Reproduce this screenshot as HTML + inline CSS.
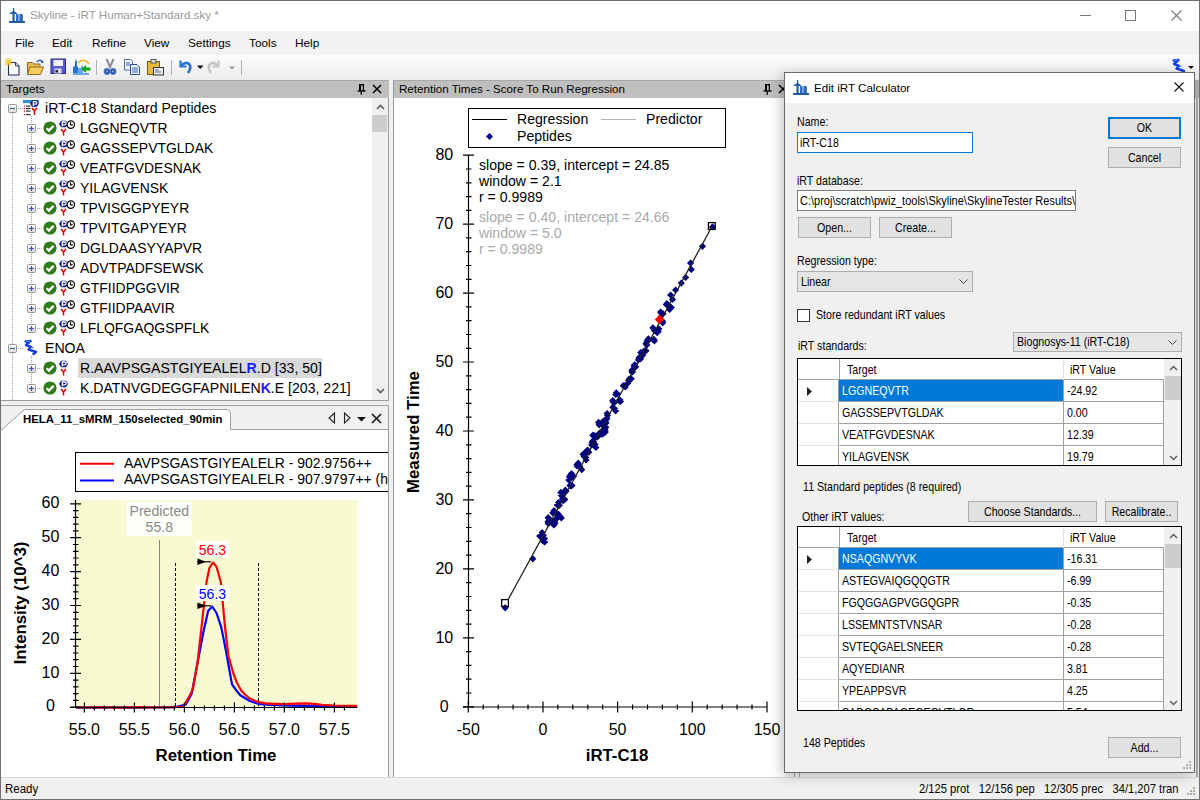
<!DOCTYPE html>
<html><head><meta charset="utf-8">
<style>
html,body{margin:0;padding:0;width:1200px;height:800px;overflow:hidden;background:#f0f0f0;font-family:"Liberation Sans", sans-serif;}
body{position:relative;}
div{box-sizing:border-box;}
svg{position:absolute;overflow:visible;}
svg text{font-family:"Liberation Sans", sans-serif;}
</style></head><body>
<div style="position:absolute;left:0px;top:0px;width:1200px;height:800px;background:#f0f0f0;"></div>
<div style="position:absolute;left:0px;top:0px;width:1200px;height:31px;background:#fff;"></div>
<div style="position:absolute;left:0px;top:31px;width:1200px;height:24px;background:#f2f2f2;"></div>
<div style="position:absolute;left:0px;top:55px;width:1200px;height:25px;background:linear-gradient(#fbfbfb,#f1f1f1 70%,#ececec);"></div>
<svg style="left:9px;top:8px" width="16" height="15" viewBox="0 0 16 15"><g fill="#1f5aa6"><rect x="3.9" y="0" width="1.3" height="3.5"/><path d="M0.8 5.2 L4.5 2.8 L8.2 5.2 V6 H0.8Z"/><rect x="3.5" y="5.5" width="2.1" height="8"/><rect x="7" y="6.2" width="2.6" height="7" fill="#2f6cc0"/><rect x="10.3" y="6" width="3.6" height="7.2" rx="0.8" fill="#2f6cc0"/><path d="M0 13 H16 V14.3 Q16 15 15.3 15 H0.7 Q0 15 0 14.3Z"/></g></svg>
<div style="position:absolute;left:30px;top:8.3px;font-size:11.65px;height:14.0px;line-height:14.0px;color:#9a9a9a;font-weight:normal;white-space:nowrap;">Skyline - iRT Human+Standard.sky *</div>
<div style="position:absolute;left:1080px;top:15px;width:11px;height:1px;background:#777;"></div>
<div style="position:absolute;left:1125px;top:10px;width:11px;height:11px;border:1px solid #777;"></div>
<svg style="left:1171px;top:10px" width="11" height="11" viewBox="0 0 11 11"><path d="M0.5 0.5 L10.5 10.5 M10.5 0.5 L0.5 10.5" stroke="#777" stroke-width="1.1"/></svg>
<div style="position:absolute;left:15px;top:35.7px;font-size:11.8px;height:14.2px;line-height:14.2px;color:#000;font-weight:normal;white-space:nowrap;">File</div>
<div style="position:absolute;left:52px;top:35.7px;font-size:11.8px;height:14.2px;line-height:14.2px;color:#000;font-weight:normal;white-space:nowrap;">Edit</div>
<div style="position:absolute;left:92px;top:35.7px;font-size:11.8px;height:14.2px;line-height:14.2px;color:#000;font-weight:normal;white-space:nowrap;">Refine</div>
<div style="position:absolute;left:144px;top:35.7px;font-size:11.8px;height:14.2px;line-height:14.2px;color:#000;font-weight:normal;white-space:nowrap;">View</div>
<div style="position:absolute;left:188px;top:35.7px;font-size:11.8px;height:14.2px;line-height:14.2px;color:#000;font-weight:normal;white-space:nowrap;">Settings</div>
<div style="position:absolute;left:249px;top:35.7px;font-size:11.8px;height:14.2px;line-height:14.2px;color:#000;font-weight:normal;white-space:nowrap;">Tools</div>
<div style="position:absolute;left:295px;top:35.7px;font-size:11.8px;height:14.2px;line-height:14.2px;color:#000;font-weight:normal;white-space:nowrap;">Help</div>
<svg style="left:4px;top:58px" width="18" height="18" viewBox="0 0 18 18"><path d="M4.5 4.5 h7 l3.5 3.5 v9 h-10.5z" fill="#fbfbff" stroke="#1f2f5a" stroke-width="1.1"/><path d="M11.5 4.5 v3.5 h3.5" fill="#dde" stroke="#1f2f5a" stroke-width="0.9"/><g fill="#f3c623"><rect x="1" y="0.5" width="7" height="7" opacity="0.55"/><rect x="3" y="2.5" width="3" height="3"/></g></svg>
<svg style="left:26px;top:58px" width="20" height="18" viewBox="0 0 20 18"><path d="M1.5 4.5 h5 l1.5 1.5 h6 v10 h-12.5z" fill="#e8b84a" stroke="#8a6a28"/><path d="M4 9 h13.5 l-3 7.5 h-13z" fill="#f6cd5a" stroke="#8a6a28"/><path d="M11 4 q3 -3.5 6 0" stroke="#2a5cb0" stroke-width="1.5" fill="none"/><path d="M15.5 2.5 l2.5 2 l-3 0.8z" fill="#2a5cb0"/></svg>
<svg style="left:50px;top:58px" width="18" height="18" viewBox="0 0 18 18"><rect x="1" y="1" width="14.5" height="14.5" fill="#5a5ad0" stroke="#2e2e8a"/><rect x="3.5" y="2" width="9.5" height="6" fill="#f2f2fa"/><rect x="4.5" y="10.5" width="7" height="5" fill="#d8d8e8"/><rect x="5.5" y="12" width="2.5" height="2.5" fill="#222"/></svg>
<svg style="left:72px;top:57px" width="20" height="20" viewBox="0 0 20 20"><path d="M1 17 v-7 l2 -1 v-4 l1 -3 l1 3 v4 l1 1 v7z" fill="#2a6fc8"/><path d="M6 17 v-6 h3 v-2 h2 v8z" fill="#6aa8e8"/><path d="M1 17 h16" stroke="#6aa8e8" stroke-width="2"/><path d="M6 6 q6 -6 11 1" stroke="#f2b21e" stroke-width="1.6" fill="none"/><path d="M9 12 l5 -4 v2.5 h4.5 v3 h-4.5 v2.5z" fill="#1aa81a"/></svg>
<div style="position:absolute;left:96px;top:60px;width:1px;height:15px;background:#b0b0b0;"></div>
<svg style="left:103px;top:58px" width="14" height="18" viewBox="0 0 14 18"><path d="M3.5 1 l4 9 M10.5 1 l-4 9" stroke="#8a8a9a" stroke-width="2"/><circle cx="4" cy="13.5" r="2.8" fill="#2a4a9a" stroke="#4a7ad0" stroke-width="1.2"/><circle cx="10" cy="13.5" r="2.8" fill="#2a4a9a" stroke="#4a7ad0" stroke-width="1.2"/><circle cx="4" cy="13.5" r="1" fill="#aac"/><circle cx="10" cy="13.5" r="1" fill="#aac"/></svg>
<svg style="left:124px;top:59px" width="17" height="16" viewBox="0 0 17 16"><path d="M0.5 0.5 h6 l2 2 v8.5 h-8z" fill="#f4f6fc" stroke="#4a6ab0"/><path d="M6.5 5.5 h6.5 l2.5 2.5 v7.5 h-9z" fill="#f4f6fc" stroke="#2a4a9a"/><path d="M8 9 h6 M8 11 h6 M8 13 h6 M2 4 h4 M2 6 h4" stroke="#2a5ac0" stroke-width="1"/></svg>
<svg style="left:147px;top:59px" width="18" height="17" viewBox="0 0 18 17"><rect x="0.5" y="2.5" width="12" height="13" fill="#e8b838" stroke="#7a5a18"/><rect x="4" y="0.5" width="5" height="3.5" fill="#ddd" stroke="#555"/><rect x="6.5" y="8.5" width="10" height="7.5" fill="#e8ecf4" stroke="#333"/><path d="M8 11 h4 M8 13 h6" stroke="#667"/></svg>
<div style="position:absolute;left:171px;top:60px;width:1px;height:15px;background:#b0b0b0;"></div>
<svg style="left:178px;top:59px" width="14" height="16" viewBox="0 0 14 16"><path d="M2.5 1.5 v6 h6" fill="none" stroke="#2a6fd8" stroke-width="2.2"/><path d="M3 7 q4 -5 8 -2 q3 3 -1 9" fill="none" stroke="#2a6fd8" stroke-width="2.6"/></svg>
<svg style="left:197px;top:65px" width="8" height="6" viewBox="0 0 8 6"><path d="M0 0.5 h6.5 l-3.25 3.5z" fill="#111"/></svg>
<svg style="left:207px;top:59px" width="14" height="16" viewBox="0 0 14 16"><path d="M11.5 1.5 v6 h-6" fill="none" stroke="#c4c4c4" stroke-width="2.2"/><path d="M11 7 q-4 -5 -8 -2 q-3 3 1 9" fill="none" stroke="#c4c4c4" stroke-width="2.6"/></svg>
<svg style="left:229px;top:66px" width="8" height="5" viewBox="0 0 8 5"><path d="M0 0.5 h6 l-3 3z" fill="#9a9a9a"/></svg>
<div style="position:absolute;left:241px;top:60px;width:1px;height:15px;background:#b0b0b0;"></div>
<svg style="left:1170px;top:57px" width="18" height="18" viewBox="0 0 18 18"><path d="M3.5 3.5 L8.5 3 L4 7 L9 8.8 L6.5 11.5 L14 14 L11.5 16" fill="none" stroke="#1a3fe8" stroke-width="2.4" stroke-linejoin="round" stroke-linecap="round"/><path d="M4 3.5 L8 3.2 M9 8.8 L11.5 10" stroke="#3a8af8" stroke-width="1.2"/></svg>
<svg style="left:1188px;top:66px" width="8" height="5" viewBox="0 0 8 5"><path d="M0 0 h6 l-3 3z" fill="#111"/></svg>
<div style="position:absolute;left:0px;top:777px;width:1200px;height:1px;background:#d9d9d9;"></div>
<div style="position:absolute;left:0px;top:778px;width:1200px;height:21px;background:#f0f0f0;"></div>
<div style="position:absolute;left:5px;top:782.9px;font-size:11.5px;height:13.8px;line-height:13.8px;color:#000;font-weight:normal;white-space:nowrap;transform:scaleY(1.1);transform-origin:0 6.9px;">Ready</div>
<div style="position:absolute;left:919px;top:783.1px;font-size:11.2px;height:13.4px;line-height:13.4px;color:#000;font-weight:normal;white-space:nowrap;transform:scaleY(1.1);transform-origin:0 6.7px;">2/125 prot&nbsp;&nbsp;&nbsp;12/156 pep&nbsp;&nbsp;&nbsp;12/305 prec&nbsp;&nbsp;&nbsp;34/1,207 tran</div>
<svg style="left:1186px;top:786px" width="10" height="10" viewBox="0 0 10 10"><g fill="#aaa"><rect x="7" y="1" width="2" height="2"/><rect x="4" y="4" width="2" height="2"/><rect x="7" y="4" width="2" height="2"/><rect x="1" y="7" width="2" height="2"/><rect x="4" y="7" width="2" height="2"/><rect x="7" y="7" width="2" height="2"/></g></svg>
<div style="position:absolute;left:0px;top:80px;width:389px;height:321px;background:#fff;border:1px solid #9a9a9a;border-top:none;"></div>
<div style="position:absolute;left:0px;top:80px;width:389px;height:18px;background:#bfbfbf;border-top:1px solid #a8a8a8;"></div>
<div style="position:absolute;left:0px;top:80px;width:1px;height:321px;background:#8a8a8a;"></div>
<div style="position:absolute;left:6px;top:81.7px;font-size:11.8px;height:14.2px;line-height:14.2px;color:#000;font-weight:normal;white-space:nowrap;">Targets</div>
<svg style="left:355px;top:83px" width="12" height="12" viewBox="0 0 12 12"><rect x="4" y="1" width="2" height="7" fill="#000"/><rect x="4" y="1" width="5" height="1.3" fill="#000"/><rect x="7.7" y="1" width="1.3" height="7" fill="#000"/><rect x="2.5" y="7.3" width="8" height="1.4" fill="#000"/><rect x="5.6" y="8.5" width="1.3" height="3.3" fill="#000"/></svg>
<svg style="left:372px;top:84px" width="10" height="10" viewBox="0 0 10 10"><path d="M1 1 L9 9 M9 1 L1 9" stroke="#000" stroke-width="1.5"/></svg>
<div style="position:absolute;left:372px;top:98px;width:16px;height:302px;background:#f0f0f0;"></div>
<svg style="left:376px;top:104px" width="9" height="6" viewBox="0 0 9 6"><path d="M1 5 L4.5 1.5 L8 5" stroke="#606060" stroke-width="1.6" fill="none"/></svg>
<div style="position:absolute;left:372px;top:115px;width:15px;height:17px;background:#cdcdcd;"></div>
<svg style="left:376px;top:388px" width="9" height="6" viewBox="0 0 9 6"><path d="M1 1 L4.5 4.5 L8 1" stroke="#606060" stroke-width="1.6" fill="none"/></svg>
<div style="position:absolute;left:12px;top:113px;width:1px;height:287px;background:repeating-linear-gradient(#a0a0a0 0 1px,transparent 1px 2px);"></div>
<svg style="left:8px;top:104px" width="9" height="9" viewBox="0 0 9 9"><defs><linearGradient id="eg" x1="0" y1="0" x2="0" y2="1"><stop offset="0" stop-color="#fff"/><stop offset="1" stop-color="#dcdcdc"/></linearGradient></defs><rect x="0.5" y="0.5" width="8" height="8" rx="1" fill="url(#eg)" stroke="#969696"/><path d="M2 4.5 h5" stroke="#3d5ea6" stroke-width="1.2"/></svg>
<div style="position:absolute;left:18px;top:108px;width:5px;height:1px;background:repeating-linear-gradient(90deg,#a0a0a0 0 1px,transparent 1px 2px);"></div>
<svg style="left:23px;top:99px" width="18" height="18" viewBox="0 0 18 18"><rect x="0" y="1" width="16" height="3.2" fill="#3a8ac8"/><g fill="#333"><rect x="3" y="6.5" width="4.5" height="1.2"/><rect x="3" y="9" width="4.5" height="1.2"/><rect x="3" y="11.5" width="4.5" height="1.2"/><rect x="3" y="15" width="4.5" height="1.2"/></g><g fill="#c00020"><rect x="0.8" y="6.5" width="1.2" height="1.2"/><rect x="0.8" y="9" width="1.2" height="1.2"/><rect x="0.8" y="11.5" width="1.2" height="1.2"/><rect x="0.8" y="15" width="1.2" height="1.2"/></g><path d="M7 4.5 L9 1.2 h5 L16 4.5 L14 7.8 h-5z" fill="#0a1a8a"/><path d="M10.3 7 V2.6 h2 q1.6 0 1.6 1.3 q0 1.3 -1.6 1.3 h-2" stroke="#fff" stroke-width="1.2" fill="none"/><path d="M9 9 L11.5 12 L14 9 M11.5 12 v4" stroke="#e00" stroke-width="1.6" fill="none"/></svg>
<div style="position:absolute;left:45px;top:100.3px;font-size:14.1px;height:16.9px;line-height:16.9px;color:#000;font-weight:normal;white-space:nowrap;">iRT-C18 Standard Peptides</div>
<div style="position:absolute;left:31px;top:116px;width:1px;height:217px;background:repeating-linear-gradient(#a0a0a0 0 1px,transparent 1px 2px);"></div>
<svg style="left:27px;top:124px" width="9" height="9" viewBox="0 0 9 9"><defs><linearGradient id="eg" x1="0" y1="0" x2="0" y2="1"><stop offset="0" stop-color="#fff"/><stop offset="1" stop-color="#dcdcdc"/></linearGradient></defs><rect x="0.5" y="0.5" width="8" height="8" rx="1" fill="url(#eg)" stroke="#969696"/><path d="M2 4.5 h5" stroke="#3d5ea6" stroke-width="1.2"/><path d="M4.5 2 v5" stroke="#3d5ea6" stroke-width="1.2"/></svg>
<div style="position:absolute;left:37px;top:128px;width:5px;height:1px;background:repeating-linear-gradient(90deg,#a0a0a0 0 1px,transparent 1px 2px);"></div>
<svg style="left:42.5px;top:121px" width="14" height="14" viewBox="0 0 14 14"><circle cx="7" cy="7" r="6.6" fill="#2e7d1a"/><path d="M3.6 7.2 L6 9.6 L10.6 4.8" stroke="#fff" stroke-width="2.2" fill="none"/></svg>
<svg style="left:58px;top:120px" width="18" height="16" viewBox="0 0 18 16"><path d="M1 4 L3 0.8 h5 L10 4 L8 7.2 h-5z" fill="#0a1a8a"/><path d="M4.3 6.6 V2 h2.2 q1.7 0 1.7 1.4 q0 1.4 -1.7 1.4 h-2.2" stroke="#fff" stroke-width="1.3" fill="none"/><path d="M3 9 L5.5 12 L8 9 M5.5 12 v3.5" stroke="#e00" stroke-width="1.5" fill="none"/><circle cx="12.8" cy="4.6" r="3.7" fill="#fff" stroke="#000" stroke-width="1.2"/><path d="M12.5 2.2 v2.7 h2.2" stroke="#000" stroke-width="1.1" fill="none"/></svg>
<div style="position:absolute;left:80px;top:120.4px;font-size:13.95px;height:16.7px;line-height:16.7px;color:#000;font-weight:normal;white-space:nowrap;">LGGNEQVTR</div>
<svg style="left:27px;top:144px" width="9" height="9" viewBox="0 0 9 9"><defs><linearGradient id="eg" x1="0" y1="0" x2="0" y2="1"><stop offset="0" stop-color="#fff"/><stop offset="1" stop-color="#dcdcdc"/></linearGradient></defs><rect x="0.5" y="0.5" width="8" height="8" rx="1" fill="url(#eg)" stroke="#969696"/><path d="M2 4.5 h5" stroke="#3d5ea6" stroke-width="1.2"/><path d="M4.5 2 v5" stroke="#3d5ea6" stroke-width="1.2"/></svg>
<div style="position:absolute;left:37px;top:148px;width:5px;height:1px;background:repeating-linear-gradient(90deg,#a0a0a0 0 1px,transparent 1px 2px);"></div>
<svg style="left:42.5px;top:141px" width="14" height="14" viewBox="0 0 14 14"><circle cx="7" cy="7" r="6.6" fill="#2e7d1a"/><path d="M3.6 7.2 L6 9.6 L10.6 4.8" stroke="#fff" stroke-width="2.2" fill="none"/></svg>
<svg style="left:58px;top:140px" width="18" height="16" viewBox="0 0 18 16"><path d="M1 4 L3 0.8 h5 L10 4 L8 7.2 h-5z" fill="#0a1a8a"/><path d="M4.3 6.6 V2 h2.2 q1.7 0 1.7 1.4 q0 1.4 -1.7 1.4 h-2.2" stroke="#fff" stroke-width="1.3" fill="none"/><path d="M3 9 L5.5 12 L8 9 M5.5 12 v3.5" stroke="#e00" stroke-width="1.5" fill="none"/><circle cx="12.8" cy="4.6" r="3.7" fill="#fff" stroke="#000" stroke-width="1.2"/><path d="M12.5 2.2 v2.7 h2.2" stroke="#000" stroke-width="1.1" fill="none"/></svg>
<div style="position:absolute;left:80px;top:140.4px;font-size:13.95px;height:16.7px;line-height:16.7px;color:#000;font-weight:normal;white-space:nowrap;">GAGSSEPVTGLDAK</div>
<svg style="left:27px;top:164px" width="9" height="9" viewBox="0 0 9 9"><defs><linearGradient id="eg" x1="0" y1="0" x2="0" y2="1"><stop offset="0" stop-color="#fff"/><stop offset="1" stop-color="#dcdcdc"/></linearGradient></defs><rect x="0.5" y="0.5" width="8" height="8" rx="1" fill="url(#eg)" stroke="#969696"/><path d="M2 4.5 h5" stroke="#3d5ea6" stroke-width="1.2"/><path d="M4.5 2 v5" stroke="#3d5ea6" stroke-width="1.2"/></svg>
<div style="position:absolute;left:37px;top:168px;width:5px;height:1px;background:repeating-linear-gradient(90deg,#a0a0a0 0 1px,transparent 1px 2px);"></div>
<svg style="left:42.5px;top:161px" width="14" height="14" viewBox="0 0 14 14"><circle cx="7" cy="7" r="6.6" fill="#2e7d1a"/><path d="M3.6 7.2 L6 9.6 L10.6 4.8" stroke="#fff" stroke-width="2.2" fill="none"/></svg>
<svg style="left:58px;top:160px" width="18" height="16" viewBox="0 0 18 16"><path d="M1 4 L3 0.8 h5 L10 4 L8 7.2 h-5z" fill="#0a1a8a"/><path d="M4.3 6.6 V2 h2.2 q1.7 0 1.7 1.4 q0 1.4 -1.7 1.4 h-2.2" stroke="#fff" stroke-width="1.3" fill="none"/><path d="M3 9 L5.5 12 L8 9 M5.5 12 v3.5" stroke="#e00" stroke-width="1.5" fill="none"/><circle cx="12.8" cy="4.6" r="3.7" fill="#fff" stroke="#000" stroke-width="1.2"/><path d="M12.5 2.2 v2.7 h2.2" stroke="#000" stroke-width="1.1" fill="none"/></svg>
<div style="position:absolute;left:80px;top:160.4px;font-size:13.95px;height:16.7px;line-height:16.7px;color:#000;font-weight:normal;white-space:nowrap;">VEATFGVDESNAK</div>
<svg style="left:27px;top:184px" width="9" height="9" viewBox="0 0 9 9"><defs><linearGradient id="eg" x1="0" y1="0" x2="0" y2="1"><stop offset="0" stop-color="#fff"/><stop offset="1" stop-color="#dcdcdc"/></linearGradient></defs><rect x="0.5" y="0.5" width="8" height="8" rx="1" fill="url(#eg)" stroke="#969696"/><path d="M2 4.5 h5" stroke="#3d5ea6" stroke-width="1.2"/><path d="M4.5 2 v5" stroke="#3d5ea6" stroke-width="1.2"/></svg>
<div style="position:absolute;left:37px;top:188px;width:5px;height:1px;background:repeating-linear-gradient(90deg,#a0a0a0 0 1px,transparent 1px 2px);"></div>
<svg style="left:42.5px;top:181px" width="14" height="14" viewBox="0 0 14 14"><circle cx="7" cy="7" r="6.6" fill="#2e7d1a"/><path d="M3.6 7.2 L6 9.6 L10.6 4.8" stroke="#fff" stroke-width="2.2" fill="none"/></svg>
<svg style="left:58px;top:180px" width="18" height="16" viewBox="0 0 18 16"><path d="M1 4 L3 0.8 h5 L10 4 L8 7.2 h-5z" fill="#0a1a8a"/><path d="M4.3 6.6 V2 h2.2 q1.7 0 1.7 1.4 q0 1.4 -1.7 1.4 h-2.2" stroke="#fff" stroke-width="1.3" fill="none"/><path d="M3 9 L5.5 12 L8 9 M5.5 12 v3.5" stroke="#e00" stroke-width="1.5" fill="none"/><circle cx="12.8" cy="4.6" r="3.7" fill="#fff" stroke="#000" stroke-width="1.2"/><path d="M12.5 2.2 v2.7 h2.2" stroke="#000" stroke-width="1.1" fill="none"/></svg>
<div style="position:absolute;left:80px;top:180.4px;font-size:13.95px;height:16.7px;line-height:16.7px;color:#000;font-weight:normal;white-space:nowrap;">YILAGVENSK</div>
<svg style="left:27px;top:204px" width="9" height="9" viewBox="0 0 9 9"><defs><linearGradient id="eg" x1="0" y1="0" x2="0" y2="1"><stop offset="0" stop-color="#fff"/><stop offset="1" stop-color="#dcdcdc"/></linearGradient></defs><rect x="0.5" y="0.5" width="8" height="8" rx="1" fill="url(#eg)" stroke="#969696"/><path d="M2 4.5 h5" stroke="#3d5ea6" stroke-width="1.2"/><path d="M4.5 2 v5" stroke="#3d5ea6" stroke-width="1.2"/></svg>
<div style="position:absolute;left:37px;top:208px;width:5px;height:1px;background:repeating-linear-gradient(90deg,#a0a0a0 0 1px,transparent 1px 2px);"></div>
<svg style="left:42.5px;top:201px" width="14" height="14" viewBox="0 0 14 14"><circle cx="7" cy="7" r="6.6" fill="#2e7d1a"/><path d="M3.6 7.2 L6 9.6 L10.6 4.8" stroke="#fff" stroke-width="2.2" fill="none"/></svg>
<svg style="left:58px;top:200px" width="18" height="16" viewBox="0 0 18 16"><path d="M1 4 L3 0.8 h5 L10 4 L8 7.2 h-5z" fill="#0a1a8a"/><path d="M4.3 6.6 V2 h2.2 q1.7 0 1.7 1.4 q0 1.4 -1.7 1.4 h-2.2" stroke="#fff" stroke-width="1.3" fill="none"/><path d="M3 9 L5.5 12 L8 9 M5.5 12 v3.5" stroke="#e00" stroke-width="1.5" fill="none"/><circle cx="12.8" cy="4.6" r="3.7" fill="#fff" stroke="#000" stroke-width="1.2"/><path d="M12.5 2.2 v2.7 h2.2" stroke="#000" stroke-width="1.1" fill="none"/></svg>
<div style="position:absolute;left:80px;top:200.4px;font-size:13.95px;height:16.7px;line-height:16.7px;color:#000;font-weight:normal;white-space:nowrap;">TPVISGGPYEYR</div>
<svg style="left:27px;top:224px" width="9" height="9" viewBox="0 0 9 9"><defs><linearGradient id="eg" x1="0" y1="0" x2="0" y2="1"><stop offset="0" stop-color="#fff"/><stop offset="1" stop-color="#dcdcdc"/></linearGradient></defs><rect x="0.5" y="0.5" width="8" height="8" rx="1" fill="url(#eg)" stroke="#969696"/><path d="M2 4.5 h5" stroke="#3d5ea6" stroke-width="1.2"/><path d="M4.5 2 v5" stroke="#3d5ea6" stroke-width="1.2"/></svg>
<div style="position:absolute;left:37px;top:228px;width:5px;height:1px;background:repeating-linear-gradient(90deg,#a0a0a0 0 1px,transparent 1px 2px);"></div>
<svg style="left:42.5px;top:221px" width="14" height="14" viewBox="0 0 14 14"><circle cx="7" cy="7" r="6.6" fill="#2e7d1a"/><path d="M3.6 7.2 L6 9.6 L10.6 4.8" stroke="#fff" stroke-width="2.2" fill="none"/></svg>
<svg style="left:58px;top:220px" width="18" height="16" viewBox="0 0 18 16"><path d="M1 4 L3 0.8 h5 L10 4 L8 7.2 h-5z" fill="#0a1a8a"/><path d="M4.3 6.6 V2 h2.2 q1.7 0 1.7 1.4 q0 1.4 -1.7 1.4 h-2.2" stroke="#fff" stroke-width="1.3" fill="none"/><path d="M3 9 L5.5 12 L8 9 M5.5 12 v3.5" stroke="#e00" stroke-width="1.5" fill="none"/><circle cx="12.8" cy="4.6" r="3.7" fill="#fff" stroke="#000" stroke-width="1.2"/><path d="M12.5 2.2 v2.7 h2.2" stroke="#000" stroke-width="1.1" fill="none"/></svg>
<div style="position:absolute;left:80px;top:220.4px;font-size:13.95px;height:16.7px;line-height:16.7px;color:#000;font-weight:normal;white-space:nowrap;">TPVITGAPYEYR</div>
<svg style="left:27px;top:244px" width="9" height="9" viewBox="0 0 9 9"><defs><linearGradient id="eg" x1="0" y1="0" x2="0" y2="1"><stop offset="0" stop-color="#fff"/><stop offset="1" stop-color="#dcdcdc"/></linearGradient></defs><rect x="0.5" y="0.5" width="8" height="8" rx="1" fill="url(#eg)" stroke="#969696"/><path d="M2 4.5 h5" stroke="#3d5ea6" stroke-width="1.2"/><path d="M4.5 2 v5" stroke="#3d5ea6" stroke-width="1.2"/></svg>
<div style="position:absolute;left:37px;top:248px;width:5px;height:1px;background:repeating-linear-gradient(90deg,#a0a0a0 0 1px,transparent 1px 2px);"></div>
<svg style="left:42.5px;top:241px" width="14" height="14" viewBox="0 0 14 14"><circle cx="7" cy="7" r="6.6" fill="#2e7d1a"/><path d="M3.6 7.2 L6 9.6 L10.6 4.8" stroke="#fff" stroke-width="2.2" fill="none"/></svg>
<svg style="left:58px;top:240px" width="18" height="16" viewBox="0 0 18 16"><path d="M1 4 L3 0.8 h5 L10 4 L8 7.2 h-5z" fill="#0a1a8a"/><path d="M4.3 6.6 V2 h2.2 q1.7 0 1.7 1.4 q0 1.4 -1.7 1.4 h-2.2" stroke="#fff" stroke-width="1.3" fill="none"/><path d="M3 9 L5.5 12 L8 9 M5.5 12 v3.5" stroke="#e00" stroke-width="1.5" fill="none"/><circle cx="12.8" cy="4.6" r="3.7" fill="#fff" stroke="#000" stroke-width="1.2"/><path d="M12.5 2.2 v2.7 h2.2" stroke="#000" stroke-width="1.1" fill="none"/></svg>
<div style="position:absolute;left:80px;top:240.4px;font-size:13.95px;height:16.7px;line-height:16.7px;color:#000;font-weight:normal;white-space:nowrap;">DGLDAASYYAPVR</div>
<svg style="left:27px;top:264px" width="9" height="9" viewBox="0 0 9 9"><defs><linearGradient id="eg" x1="0" y1="0" x2="0" y2="1"><stop offset="0" stop-color="#fff"/><stop offset="1" stop-color="#dcdcdc"/></linearGradient></defs><rect x="0.5" y="0.5" width="8" height="8" rx="1" fill="url(#eg)" stroke="#969696"/><path d="M2 4.5 h5" stroke="#3d5ea6" stroke-width="1.2"/><path d="M4.5 2 v5" stroke="#3d5ea6" stroke-width="1.2"/></svg>
<div style="position:absolute;left:37px;top:268px;width:5px;height:1px;background:repeating-linear-gradient(90deg,#a0a0a0 0 1px,transparent 1px 2px);"></div>
<svg style="left:42.5px;top:261px" width="14" height="14" viewBox="0 0 14 14"><circle cx="7" cy="7" r="6.6" fill="#2e7d1a"/><path d="M3.6 7.2 L6 9.6 L10.6 4.8" stroke="#fff" stroke-width="2.2" fill="none"/></svg>
<svg style="left:58px;top:260px" width="18" height="16" viewBox="0 0 18 16"><path d="M1 4 L3 0.8 h5 L10 4 L8 7.2 h-5z" fill="#0a1a8a"/><path d="M4.3 6.6 V2 h2.2 q1.7 0 1.7 1.4 q0 1.4 -1.7 1.4 h-2.2" stroke="#fff" stroke-width="1.3" fill="none"/><path d="M3 9 L5.5 12 L8 9 M5.5 12 v3.5" stroke="#e00" stroke-width="1.5" fill="none"/><circle cx="12.8" cy="4.6" r="3.7" fill="#fff" stroke="#000" stroke-width="1.2"/><path d="M12.5 2.2 v2.7 h2.2" stroke="#000" stroke-width="1.1" fill="none"/></svg>
<div style="position:absolute;left:80px;top:260.4px;font-size:13.95px;height:16.7px;line-height:16.7px;color:#000;font-weight:normal;white-space:nowrap;">ADVTPADFSEWSK</div>
<svg style="left:27px;top:284px" width="9" height="9" viewBox="0 0 9 9"><defs><linearGradient id="eg" x1="0" y1="0" x2="0" y2="1"><stop offset="0" stop-color="#fff"/><stop offset="1" stop-color="#dcdcdc"/></linearGradient></defs><rect x="0.5" y="0.5" width="8" height="8" rx="1" fill="url(#eg)" stroke="#969696"/><path d="M2 4.5 h5" stroke="#3d5ea6" stroke-width="1.2"/><path d="M4.5 2 v5" stroke="#3d5ea6" stroke-width="1.2"/></svg>
<div style="position:absolute;left:37px;top:288px;width:5px;height:1px;background:repeating-linear-gradient(90deg,#a0a0a0 0 1px,transparent 1px 2px);"></div>
<svg style="left:42.5px;top:281px" width="14" height="14" viewBox="0 0 14 14"><circle cx="7" cy="7" r="6.6" fill="#2e7d1a"/><path d="M3.6 7.2 L6 9.6 L10.6 4.8" stroke="#fff" stroke-width="2.2" fill="none"/></svg>
<svg style="left:58px;top:280px" width="18" height="16" viewBox="0 0 18 16"><path d="M1 4 L3 0.8 h5 L10 4 L8 7.2 h-5z" fill="#0a1a8a"/><path d="M4.3 6.6 V2 h2.2 q1.7 0 1.7 1.4 q0 1.4 -1.7 1.4 h-2.2" stroke="#fff" stroke-width="1.3" fill="none"/><path d="M3 9 L5.5 12 L8 9 M5.5 12 v3.5" stroke="#e00" stroke-width="1.5" fill="none"/><circle cx="12.8" cy="4.6" r="3.7" fill="#fff" stroke="#000" stroke-width="1.2"/><path d="M12.5 2.2 v2.7 h2.2" stroke="#000" stroke-width="1.1" fill="none"/></svg>
<div style="position:absolute;left:80px;top:280.4px;font-size:13.95px;height:16.7px;line-height:16.7px;color:#000;font-weight:normal;white-space:nowrap;">GTFIIDPGGVIR</div>
<svg style="left:27px;top:304px" width="9" height="9" viewBox="0 0 9 9"><defs><linearGradient id="eg" x1="0" y1="0" x2="0" y2="1"><stop offset="0" stop-color="#fff"/><stop offset="1" stop-color="#dcdcdc"/></linearGradient></defs><rect x="0.5" y="0.5" width="8" height="8" rx="1" fill="url(#eg)" stroke="#969696"/><path d="M2 4.5 h5" stroke="#3d5ea6" stroke-width="1.2"/><path d="M4.5 2 v5" stroke="#3d5ea6" stroke-width="1.2"/></svg>
<div style="position:absolute;left:37px;top:308px;width:5px;height:1px;background:repeating-linear-gradient(90deg,#a0a0a0 0 1px,transparent 1px 2px);"></div>
<svg style="left:42.5px;top:301px" width="14" height="14" viewBox="0 0 14 14"><circle cx="7" cy="7" r="6.6" fill="#2e7d1a"/><path d="M3.6 7.2 L6 9.6 L10.6 4.8" stroke="#fff" stroke-width="2.2" fill="none"/></svg>
<svg style="left:58px;top:300px" width="18" height="16" viewBox="0 0 18 16"><path d="M1 4 L3 0.8 h5 L10 4 L8 7.2 h-5z" fill="#0a1a8a"/><path d="M4.3 6.6 V2 h2.2 q1.7 0 1.7 1.4 q0 1.4 -1.7 1.4 h-2.2" stroke="#fff" stroke-width="1.3" fill="none"/><path d="M3 9 L5.5 12 L8 9 M5.5 12 v3.5" stroke="#e00" stroke-width="1.5" fill="none"/><circle cx="12.8" cy="4.6" r="3.7" fill="#fff" stroke="#000" stroke-width="1.2"/><path d="M12.5 2.2 v2.7 h2.2" stroke="#000" stroke-width="1.1" fill="none"/></svg>
<div style="position:absolute;left:80px;top:300.4px;font-size:13.95px;height:16.7px;line-height:16.7px;color:#000;font-weight:normal;white-space:nowrap;">GTFIIDPAAVIR</div>
<svg style="left:27px;top:324px" width="9" height="9" viewBox="0 0 9 9"><defs><linearGradient id="eg" x1="0" y1="0" x2="0" y2="1"><stop offset="0" stop-color="#fff"/><stop offset="1" stop-color="#dcdcdc"/></linearGradient></defs><rect x="0.5" y="0.5" width="8" height="8" rx="1" fill="url(#eg)" stroke="#969696"/><path d="M2 4.5 h5" stroke="#3d5ea6" stroke-width="1.2"/><path d="M4.5 2 v5" stroke="#3d5ea6" stroke-width="1.2"/></svg>
<div style="position:absolute;left:37px;top:328px;width:5px;height:1px;background:repeating-linear-gradient(90deg,#a0a0a0 0 1px,transparent 1px 2px);"></div>
<svg style="left:42.5px;top:321px" width="14" height="14" viewBox="0 0 14 14"><circle cx="7" cy="7" r="6.6" fill="#2e7d1a"/><path d="M3.6 7.2 L6 9.6 L10.6 4.8" stroke="#fff" stroke-width="2.2" fill="none"/></svg>
<svg style="left:58px;top:320px" width="18" height="16" viewBox="0 0 18 16"><path d="M1 4 L3 0.8 h5 L10 4 L8 7.2 h-5z" fill="#0a1a8a"/><path d="M4.3 6.6 V2 h2.2 q1.7 0 1.7 1.4 q0 1.4 -1.7 1.4 h-2.2" stroke="#fff" stroke-width="1.3" fill="none"/><path d="M3 9 L5.5 12 L8 9 M5.5 12 v3.5" stroke="#e00" stroke-width="1.5" fill="none"/><circle cx="12.8" cy="4.6" r="3.7" fill="#fff" stroke="#000" stroke-width="1.2"/><path d="M12.5 2.2 v2.7 h2.2" stroke="#000" stroke-width="1.1" fill="none"/></svg>
<div style="position:absolute;left:80px;top:320.4px;font-size:13.95px;height:16.7px;line-height:16.7px;color:#000;font-weight:normal;white-space:nowrap;">LFLQFGAQGSPFLK</div>
<svg style="left:8px;top:344px" width="9" height="9" viewBox="0 0 9 9"><defs><linearGradient id="eg" x1="0" y1="0" x2="0" y2="1"><stop offset="0" stop-color="#fff"/><stop offset="1" stop-color="#dcdcdc"/></linearGradient></defs><rect x="0.5" y="0.5" width="8" height="8" rx="1" fill="url(#eg)" stroke="#969696"/><path d="M2 4.5 h5" stroke="#3d5ea6" stroke-width="1.2"/></svg>
<div style="position:absolute;left:18px;top:348px;width:5px;height:1px;background:repeating-linear-gradient(90deg,#a0a0a0 0 1px,transparent 1px 2px);"></div>
<svg style="left:22px;top:338px" width="18" height="18" viewBox="0 0 18 18"><path d="M3.5 3.5 L8.5 3 L4 7 L9 8.8 L6.5 11.5 L14 14 L11.5 16" fill="none" stroke="#1a3fe8" stroke-width="2.4" stroke-linejoin="round" stroke-linecap="round"/><path d="M4 3.5 L8 3.2 M9 8.8 L11.5 10" stroke="#3a8af8" stroke-width="1.2"/></svg>
<div style="position:absolute;left:45px;top:340.3px;font-size:14.1px;height:16.9px;line-height:16.9px;color:#000;font-weight:normal;white-space:nowrap;">ENOA</div>
<div style="position:absolute;left:31px;top:356px;width:1px;height:37px;background:repeating-linear-gradient(#a0a0a0 0 1px,transparent 1px 2px);"></div>
<div style="position:absolute;left:78px;top:358px;width:244px;height:20px;background:#d9d9d9;"></div>
<svg style="left:27px;top:364px" width="9" height="9" viewBox="0 0 9 9"><defs><linearGradient id="eg" x1="0" y1="0" x2="0" y2="1"><stop offset="0" stop-color="#fff"/><stop offset="1" stop-color="#dcdcdc"/></linearGradient></defs><rect x="0.5" y="0.5" width="8" height="8" rx="1" fill="url(#eg)" stroke="#969696"/><path d="M2 4.5 h5" stroke="#3d5ea6" stroke-width="1.2"/><path d="M4.5 2 v5" stroke="#3d5ea6" stroke-width="1.2"/></svg>
<div style="position:absolute;left:37px;top:368px;width:5px;height:1px;background:repeating-linear-gradient(90deg,#a0a0a0 0 1px,transparent 1px 2px);"></div>
<svg style="left:42.5px;top:361px" width="14" height="14" viewBox="0 0 14 14"><circle cx="7" cy="7" r="6.6" fill="#2e7d1a"/><path d="M3.6 7.2 L6 9.6 L10.6 4.8" stroke="#fff" stroke-width="2.2" fill="none"/></svg>
<svg style="left:58px;top:360px" width="18" height="16" viewBox="0 0 18 16"><path d="M1 4 L3 0.8 h5 L10 4 L8 7.2 h-5z" fill="#0a1a8a"/><path d="M4.3 6.6 V2 h2.2 q1.7 0 1.7 1.4 q0 1.4 -1.7 1.4 h-2.2" stroke="#fff" stroke-width="1.3" fill="none"/><path d="M3 9 L5.5 12 L8 9 M5.5 12 v3.5" stroke="#e00" stroke-width="1.5" fill="none"/></svg>
<div style="position:absolute;left:80px;top:360.3px;font-size:14.1px;height:16.9px;line-height:16.9px;color:#000;font-weight:normal;white-space:nowrap;">R.AAVPSGASTGIYEALEL<b style="color:#1a1aff">R</b>.D [33, 50]</div>
<svg style="left:27px;top:384px" width="9" height="9" viewBox="0 0 9 9"><defs><linearGradient id="eg" x1="0" y1="0" x2="0" y2="1"><stop offset="0" stop-color="#fff"/><stop offset="1" stop-color="#dcdcdc"/></linearGradient></defs><rect x="0.5" y="0.5" width="8" height="8" rx="1" fill="url(#eg)" stroke="#969696"/><path d="M2 4.5 h5" stroke="#3d5ea6" stroke-width="1.2"/><path d="M4.5 2 v5" stroke="#3d5ea6" stroke-width="1.2"/></svg>
<div style="position:absolute;left:37px;top:388px;width:5px;height:1px;background:repeating-linear-gradient(90deg,#a0a0a0 0 1px,transparent 1px 2px);"></div>
<svg style="left:42.5px;top:381px" width="14" height="14" viewBox="0 0 14 14"><circle cx="7" cy="7" r="6.6" fill="#2e7d1a"/><path d="M3.6 7.2 L6 9.6 L10.6 4.8" stroke="#fff" stroke-width="2.2" fill="none"/></svg>
<svg style="left:58px;top:380px" width="18" height="16" viewBox="0 0 18 16"><path d="M1 4 L3 0.8 h5 L10 4 L8 7.2 h-5z" fill="#0a1a8a"/><path d="M4.3 6.6 V2 h2.2 q1.7 0 1.7 1.4 q0 1.4 -1.7 1.4 h-2.2" stroke="#fff" stroke-width="1.3" fill="none"/><path d="M3 9 L5.5 12 L8 9 M5.5 12 v3.5" stroke="#e00" stroke-width="1.5" fill="none"/></svg>
<div style="position:absolute;left:80px;top:380.3px;font-size:14.1px;height:16.9px;line-height:16.9px;color:#000;font-weight:normal;white-space:nowrap;">K.DATNVGDEGGFAPNILEN<b style="color:#1a1aff">K</b>.E [203, 221]</div>
<div style="position:absolute;left:0px;top:405px;width:389px;height:372px;background:#fff;border:1px solid #9a9a9a;border-top:none;border-bottom:none;"></div>
<div style="position:absolute;left:0px;top:405px;width:389px;height:25px;background:#f0f0f0;border-top:1px solid #a0a0a0;border-right:1px solid #a0a0a0;"></div>
<div style="position:absolute;left:0px;top:429px;width:389px;height:1px;background:#a0a0a0;"></div>
<div style="position:absolute;left:0px;top:405px;width:1px;height:372px;background:#8a8a8a;"></div>
<svg style="left:1px;top:408px" width="232" height="23" viewBox="0 0 232 23"><path d="M1 21.5 L23.5 1.5 H224 Q229.5 1.5 229.5 6 V21.5" fill="#fff" stroke="#a0a0a0"/><rect x="2" y="21" width="227" height="2" fill="#fff"/></svg>
<div style="position:absolute;left:23px;top:412.9px;font-size:11.4px;height:13.7px;line-height:13.7px;color:#000;font-weight:bold;white-space:nowrap;">HELA_11_sMRM_150selected_90min</div>
<svg style="left:326px;top:412px" width="12" height="12" viewBox="0 0 12 12"><path d="M8.5 1 L3 6 L8.5 11 Z" fill="none" stroke="#222" stroke-width="1.1"/></svg>
<svg style="left:341px;top:412px" width="12" height="12" viewBox="0 0 12 12"><path d="M3.5 1 L9 6 L3.5 11 Z" fill="none" stroke="#222" stroke-width="1.1"/></svg>
<svg style="left:356px;top:415px" width="12" height="8" viewBox="0 0 12 8"><path d="M1 2 H10 L5.5 6.5Z" fill="#111"/></svg>
<svg style="left:371px;top:413px" width="11" height="11" viewBox="0 0 11 11"><path d="M1 1 L10 10 M10 1 L1 10" stroke="#111" stroke-width="1.5"/></svg>
<div style="position:absolute;left:1px;top:430px;width:387px;height:347px;overflow:hidden;"><svg style="left:-1px;top:-430px" width="389" height="777" viewBox="0 0 389 777"><rect x="76" y="500" width="281.5" height="207" fill="#fafad2"/><rect x="75.5" y="452.5" width="320" height="39" fill="#fff" stroke="#000" stroke-width="1"/><path d="M80 463.7 H114" stroke="#ff0000" stroke-width="2"/><path d="M80 480.5 H114" stroke="#0000ff" stroke-width="2"/><text x="124" y="467.6" font-size="13.95">AAVPSGASTGIYEALELR - 902.9756++</text><text x="124" y="484.4" font-size="13.95">AAVPSGASTGIYEALELR - 907.9797++ (heavy)</text><rect x="126.5" y="502" width="65.5" height="34" fill="#fefefa"/><text x="159.3" y="515.5" font-size="14.1" fill="#8a8a8a" text-anchor="middle">Predicted</text><text x="159.3" y="531.5" font-size="14.1" fill="#8a8a8a" text-anchor="middle">55.8</text><path d="M159.5 540 V707" stroke="#888" stroke-width="1"/><path d="M175.5 563 V707 M258.5 563 V707" stroke="#000" stroke-width="1" stroke-dasharray="3,2"/><polyline points="76.0,707.6 110.0,707.4 130.0,707.6 150.0,707.5 175.0,707.2 185.6,704.6 191.6,694.0 197.5,663.0 203.4,632.0 208.2,610.8 212.2,606.5 216.5,613.0 221.3,627.4 226.0,651.0 229.0,668.0 232.0,684.4 236.0,690.0 240.3,695.3 249.8,701.0 258.0,703.8 270.0,705.0 290.0,705.6 310.0,705.8 330.0,706.4 357.0,706.6" fill="none" stroke="#0000ff" stroke-width="2.2" stroke-linejoin="round"/><polyline points="76.0,707.5 100.0,707.3 120.0,707.6 140.0,707.2 160.0,707.5 183.0,707.0 186.8,700.5 189.5,696.0 192.8,689.5 197.5,663.0 202.3,620.0 206.5,582.0 209.4,568.0 213.0,562.5 216.5,566.8 220.8,582.0 224.8,625.0 228.4,656.0 233.1,672.5 237.0,683.0 241.4,690.7 245.0,694.5 249.8,698.5 258.5,702.2 266.0,703.3 275.0,703.8 285.0,704.2 295.0,703.6 305.0,703.4 315.0,703.8 322.0,704.8 335.0,705.5 357.0,705.8" fill="none" stroke="#ff0000" stroke-width="2.2" stroke-linejoin="round"/><rect x="196" y="541" width="33" height="16" fill="#fffffa"/><text x="212.5" y="554.5" font-size="14.1" fill="#ff0000" text-anchor="middle">56.3</text><path d="M197.5 558.5 L206 561.8 L197.5 565 Z" fill="#000"/><path d="M197 561.8 H211" stroke="#000" stroke-width="1.2"/><rect x="196" y="585" width="33" height="16" fill="#fffffa"/><text x="212.5" y="598.5" font-size="14.1" fill="#0000ff" text-anchor="middle">56.3</text><path d="M197.5 602.5 L206 605.8 L197.5 609 Z" fill="#000"/><path d="M197 605.8 H211" stroke="#000" stroke-width="1.2"/><path d="M75.5 500 V707.5 M70 707.5 H357.5" stroke="#000" stroke-width="1.2"/><path d="M70 707.2 H81 M73 700.4 H78.5 M73 693.6 H78.5 M73 686.9 H78.5 M73 680.1 H78.5 M70 673.3 H81 M73 666.5 H78.5 M73 659.7 H78.5 M73 653.0 H78.5 M73 646.2 H78.5 M70 639.4 H81 M73 632.6 H78.5 M73 625.8 H78.5 M73 619.1 H78.5 M73 612.3 H78.5 M70 605.5 H81 M73 598.7 H78.5 M73 591.9 H78.5 M73 585.2 H78.5 M73 578.4 H78.5 M70 571.6 H81 M73 564.8 H78.5 M73 558.0 H78.5 M73 551.3 H78.5 M73 544.5 H78.5 M70 537.7 H81 M73 530.9 H78.5 M73 524.1 H78.5 M73 517.4 H78.5 M73 510.6 H78.5 M70 503.8 H81 M84.4 702.5 V712.5 M94.4 705.5 V710.5 M104.4 705.5 V710.5 M114.4 705.5 V710.5 M124.4 705.5 V710.5 M134.4 702.5 V712.5 M144.4 705.5 V710.5 M154.4 705.5 V710.5 M164.4 705.5 V710.5 M174.4 705.5 V710.5 M184.4 702.5 V712.5 M194.4 705.5 V710.5 M204.4 705.5 V710.5 M214.4 705.5 V710.5 M224.4 705.5 V710.5 M234.4 702.5 V712.5 M244.4 705.5 V710.5 M254.4 705.5 V710.5 M264.4 705.5 V710.5 M274.4 705.5 V710.5 M284.4 702.5 V712.5 M294.4 705.5 V710.5 M304.4 705.5 V710.5 M314.4 705.5 V710.5 M324.4 705.5 V710.5 M334.4 702.5 V712.5 M344.4 705.5 V710.5" stroke="#000" stroke-width="1.2"/><text x="50.5" y="711.4" font-size="16" text-anchor="middle">0</text><text x="50.5" y="677.5" font-size="16" text-anchor="middle">10</text><text x="50.5" y="643.6" font-size="16" text-anchor="middle">20</text><text x="50.5" y="609.7" font-size="16" text-anchor="middle">30</text><text x="50.5" y="575.8" font-size="16" text-anchor="middle">40</text><text x="50.5" y="541.9" font-size="16" text-anchor="middle">50</text><text x="50.5" y="508.0" font-size="16" text-anchor="middle">60</text><text x="84.4" y="735" font-size="16" text-anchor="middle">55.0</text><text x="134.4" y="735" font-size="16" text-anchor="middle">55.5</text><text x="184.4" y="735" font-size="16" text-anchor="middle">56.0</text><text x="234.4" y="735" font-size="16" text-anchor="middle">56.5</text><text x="284.4" y="735" font-size="16" text-anchor="middle">57.0</text><text x="334.4" y="735" font-size="16" text-anchor="middle">57.5</text><text x="216" y="761" font-size="16.8" font-weight="bold" text-anchor="middle">Retention Time</text><text transform="translate(26 603) rotate(-90)" font-size="16.8" font-weight="bold" text-anchor="middle">Intensity (10^3)</text></svg></div>
<div style="position:absolute;left:393px;top:80px;width:393px;height:697px;background:#fff;border-left:1px solid #9a9a9a;"></div>
<div style="position:absolute;left:393px;top:80px;width:393px;height:18px;background:#bfbfbf;border-top:1px solid #a8a8a8;border-left:1px solid #9a9a9a;"></div>
<div style="position:absolute;left:399px;top:81.8px;font-size:11.6px;height:13.9px;line-height:13.9px;color:#000;font-weight:normal;white-space:nowrap;">Retention Times - Score To Run Regression</div>
<svg style="left:761px;top:83px" width="12" height="12" viewBox="0 0 12 12"><rect x="4" y="1" width="2" height="7" fill="#000"/><rect x="4" y="1" width="5" height="1.3" fill="#000"/><rect x="7.7" y="1" width="1.3" height="7" fill="#000"/><rect x="2.5" y="7.3" width="8" height="1.4" fill="#000"/><rect x="5.6" y="8.5" width="1.3" height="3.3" fill="#000"/></svg>
<svg style="left:778px;top:84px" width="10" height="10" viewBox="0 0 10 10"><path d="M1 1 L9 9 M9 1 L1 9" stroke="#000" stroke-width="1.5"/></svg>
<div style="position:absolute;left:394px;top:98px;width:392px;height:679px;overflow:hidden;"><svg style="left:-394px;top:-98px" width="786" height="777" viewBox="0 0 786 777"><rect x="468.5" y="108.5" width="257" height="39" fill="#fff" stroke="#000"/><path d="M472 119.5 H507" stroke="#000"/><path d="M601 119.5 H636" stroke="#b4b4b4"/><text x="517" y="123.5" font-size="14.1">Regression</text><text x="646" y="123.5" font-size="14.1">Predictor</text><path d="M489.5 133 L493 136.5 L489.5 140 L486 136.5Z" fill="#000080"/><text x="517" y="140.5" font-size="14.1">Peptides</text><text x="479" y="170.3" font-size="14.1">slope = 0.39, intercept = 24.85</text><text x="479" y="186.3" font-size="14.1">window = 2.1</text><text x="479" y="202.3" font-size="14.1">r = 0.9989</text><text x="479" y="222.3" font-size="14.1" fill="#aaaaaa">slope = 0.40, intercept = 24.66</text><text x="479" y="238.3" font-size="14.1" fill="#aaaaaa">window = 5.0</text><text x="479" y="254.3" font-size="14.1" fill="#aaaaaa">r = 0.9989</text><path d="M505.2 604.2L508.8 607.8L505.2 611.4L501.6 607.8ZM532.8 555.2L536.4 558.8L532.8 562.4L529.2 558.8ZM542.1 529.0L545.7 532.6L542.1 536.2L538.5 532.6ZM541.6 532.7L545.2 536.3L541.6 539.9L538.0 536.3ZM542.9 537.4L546.5 541.0L542.9 544.6L539.3 541.0ZM548.1 519.6L551.7 523.2L548.1 526.8L544.5 523.2ZM550.0 515.8L553.6 519.4L550.0 523.0L546.4 519.4ZM552.8 509.3L556.4 512.9L552.8 516.5L549.2 512.9ZM557.5 514.0L561.1 517.6L557.5 521.2L553.9 517.6ZM559.4 512.1L563.0 515.7L559.4 519.3L555.8 515.7ZM554.7 518.6L558.3 522.2L554.7 525.8L551.1 522.2ZM558.5 498.9L562.1 502.5L558.5 506.1L554.9 502.5ZM563.2 497.1L566.8 500.7L563.2 504.3L559.6 500.7ZM562.2 491.4L565.8 495.0L562.2 498.6L558.6 495.0ZM566.0 487.7L569.6 491.3L566.0 494.9L562.4 491.3ZM570.7 482.1L574.3 485.7L570.7 489.3L567.1 485.7ZM568.8 476.4L572.4 480.0L568.8 483.6L565.2 480.0ZM571.6 470.8L575.2 474.4L571.6 478.0L568.0 474.4ZM573.5 472.7L577.1 476.3L573.5 479.9L569.9 476.3ZM578.2 459.6L581.8 463.2L578.2 466.8L574.6 463.2ZM580.0 463.4L583.6 467.0L580.0 470.6L576.4 467.0ZM584.7 449.2L588.3 452.8L584.7 456.4L581.1 452.8ZM587.5 446.4L591.1 450.0L587.5 453.6L583.9 450.0ZM585.7 453.9L589.3 457.5L585.7 461.1L582.1 457.5ZM592.2 438.9L595.8 442.5L592.2 446.1L588.6 442.5ZM595.0 434.2L598.6 437.8L595.0 441.4L591.4 437.8ZM595.0 440.8L598.6 444.4L595.0 448.0L591.4 444.4ZM600.7 430.4L604.3 434.0L600.7 437.6L597.1 434.0ZM598.8 419.2L602.4 422.8L598.8 426.4L595.2 422.8ZM604.4 418.3L608.0 421.9L604.4 425.5L600.8 421.9ZM604.4 425.8L608.0 429.4L604.4 433.0L600.8 429.4ZM594.4 432.1L598.0 435.7L594.4 439.3L590.8 435.7ZM598.8 431.2L602.4 434.8L598.8 438.4L595.2 434.8ZM604.0 417.2L607.6 420.8L604.0 424.4L600.4 420.8ZM604.9 426.0L608.5 429.6L604.9 433.2L601.3 429.6ZM607.5 412.0L611.1 415.6L607.5 419.2L603.9 415.6ZM612.8 398.0L616.4 401.6L612.8 405.2L609.2 401.6ZM614.5 405.0L618.1 408.6L614.5 412.2L610.9 408.6ZM616.3 389.2L619.9 392.8L616.3 396.4L612.7 392.8ZM619.8 396.2L623.4 399.8L619.8 403.4L616.2 399.8ZM624.2 382.2L627.8 385.8L624.2 389.4L620.6 385.8ZM628.5 377.0L632.1 380.6L628.5 384.2L624.9 380.6ZM631.2 375.2L634.8 378.8L631.2 382.4L627.6 378.8ZM632.0 366.4L635.6 370.0L632.0 373.6L628.4 370.0ZM634.7 361.2L638.3 364.8L634.7 368.4L631.1 364.8ZM639.0 354.2L642.6 357.8L639.0 361.4L635.4 357.8ZM640.8 348.9L644.4 352.5L640.8 356.1L637.2 352.5ZM644.3 347.2L647.9 350.8L644.3 354.4L640.7 350.8ZM646.0 340.2L649.6 343.8L646.0 347.4L642.4 343.8ZM647.8 335.8L651.4 339.4L647.8 343.0L644.2 339.4ZM653.9 335.8L657.5 339.4L653.9 343.0L650.3 339.4ZM654.8 326.2L658.4 329.8L654.8 333.4L651.2 329.8ZM658.3 327.9L661.9 331.5L658.3 335.1L654.7 331.5ZM662.7 319.2L666.3 322.8L662.7 326.4L659.1 322.8ZM661.8 311.3L665.4 314.9L661.8 318.5L658.2 314.9ZM667.0 300.8L670.6 304.4L667.0 308.0L663.4 304.4ZM670.6 303.4L674.2 307.0L670.6 310.6L667.0 307.0ZM712.5 223.3L716.1 226.9L712.5 230.5L708.9 226.9ZM702.5 242.7L706.1 246.3L702.5 249.9L698.9 246.3ZM690.6 259.5L694.2 263.1L690.6 266.7L687.0 263.1ZM691.3 265.8L694.9 269.4L691.3 273.0L687.7 269.4ZM685.6 273.9L689.2 277.5L685.6 281.1L682.0 277.5ZM681.3 279.5L684.9 283.1L681.3 286.7L677.7 283.1ZM675.6 286.4L679.2 290.0L675.6 293.6L672.0 290.0ZM670.6 291.4L674.2 295.0L670.6 298.6L667.0 295.0ZM672.5 295.8L676.1 299.4L672.5 303.0L668.9 299.4ZM666.3 300.8L669.9 304.4L666.3 308.0L662.7 304.4ZM671.3 303.9L674.9 307.5L671.3 311.1L667.7 307.5ZM663.1 310.2L666.7 313.8L663.1 317.4L659.5 313.8ZM542.6 530.5L546.2 534.1L542.6 537.7L539.0 534.1ZM543.3 531.7L546.9 535.3L543.3 538.9L539.7 535.3ZM542.6 535.2L546.2 538.8L542.6 542.4L539.0 538.8ZM539.7 532.5L543.3 536.1L539.7 539.7L536.1 536.1ZM544.7 538.3L548.3 541.9L544.7 545.5L541.1 541.9ZM544.5 535.1L548.1 538.7L544.5 542.3L540.9 538.7ZM548.0 518.1L551.6 521.7L548.0 525.3L544.4 521.7ZM548.3 520.0L551.9 523.6L548.3 527.2L544.7 523.6ZM548.1 514.1L551.7 517.7L548.1 521.3L544.5 517.7ZM549.1 518.3L552.7 521.9L549.1 525.5L545.5 521.9ZM553.9 507.3L557.5 510.9L553.9 514.5L550.3 510.9ZM554.0 507.1L557.6 510.7L554.0 514.3L550.4 510.7ZM558.0 511.8L561.6 515.4L558.0 519.0L554.4 515.4ZM555.5 516.2L559.1 519.8L555.5 523.4L551.9 519.8ZM558.2 510.4L561.8 514.0L558.2 517.6L554.6 514.0ZM561.3 514.3L564.9 517.9L561.3 521.5L557.7 517.9ZM553.9 521.4L557.5 525.0L553.9 528.6L550.3 525.0ZM554.9 519.7L558.5 523.3L554.9 526.9L551.3 523.3ZM557.3 501.5L560.9 505.1L557.3 508.7L553.7 505.1ZM559.3 501.7L562.9 505.3L559.3 508.9L555.7 505.3ZM564.8 495.9L568.4 499.5L564.8 503.1L561.2 499.5ZM562.6 495.1L566.2 498.7L562.6 502.3L559.0 498.7ZM560.8 488.8L564.4 492.4L560.8 496.0L557.2 492.4ZM561.4 492.0L565.0 495.6L561.4 499.2L557.8 495.6ZM564.0 488.8L567.6 492.4L564.0 496.0L560.4 492.4ZM565.4 486.6L569.0 490.2L565.4 493.8L561.8 490.2ZM572.0 482.0L575.6 485.6L572.0 489.2L568.4 485.6ZM570.0 482.0L573.6 485.6L570.0 489.2L566.4 485.6ZM569.6 473.7L573.2 477.3L569.6 480.9L566.0 477.3ZM570.7 473.5L574.3 477.1L570.7 480.7L567.1 477.1ZM572.6 472.9L576.2 476.5L572.6 480.1L569.0 476.5ZM569.7 472.5L573.3 476.1L569.7 479.7L566.1 476.1ZM573.0 473.2L576.6 476.8L573.0 480.4L569.4 476.8ZM571.5 470.0L575.1 473.6L571.5 477.2L567.9 473.6ZM576.9 462.3L580.5 465.9L576.9 469.5L573.3 465.9ZM577.0 461.1L580.6 464.7L577.0 468.3L573.4 464.7ZM581.7 466.1L585.3 469.7L581.7 473.3L578.1 469.7ZM579.4 462.5L583.0 466.1L579.4 469.7L575.8 466.1ZM584.8 450.9L588.4 454.5L584.8 458.1L581.2 454.5ZM583.1 450.7L586.7 454.3L583.1 457.9L579.5 454.3ZM588.7 448.6L592.3 452.2L588.7 455.8L585.1 452.2ZM585.6 449.1L589.2 452.7L585.6 456.3L582.0 452.7ZM584.1 452.9L587.7 456.5L584.1 460.1L580.5 456.5ZM586.1 456.4L589.7 460.0L586.1 463.6L582.5 460.0ZM591.6 441.4L595.2 445.0L591.6 448.6L588.0 445.0ZM592.4 437.8L596.0 441.4L592.4 445.0L588.8 441.4ZM594.3 432.3L597.9 435.9L594.3 439.5L590.7 435.9ZM593.3 432.1L596.9 435.7L593.3 439.3L589.7 435.7ZM595.8 443.8L599.4 447.4L595.8 451.0L592.2 447.4ZM593.6 438.1L597.2 441.7L593.6 445.3L590.0 441.7ZM602.6 430.6L606.2 434.2L602.6 437.8L599.0 434.2ZM600.3 428.8L603.9 432.4L600.3 436.0L596.7 432.4ZM599.2 421.2L602.8 424.8L599.2 428.4L595.6 424.8ZM598.6 418.7L602.2 422.3L598.6 425.9L595.0 422.3ZM602.6 420.8L606.2 424.4L602.6 428.0L599.0 424.4ZM602.5 418.3L606.1 421.9L602.5 425.5L598.9 421.9ZM605.8 423.6L609.4 427.2L605.8 430.8L602.2 427.2ZM605.3 428.5L608.9 432.1L605.3 435.7L601.7 432.1ZM594.9 433.8L598.5 437.4L594.9 441.0L591.3 437.4ZM592.8 431.7L596.4 435.3L592.8 438.9L589.2 435.3ZM597.4 433.3L601.0 436.9L597.4 440.5L593.8 436.9ZM598.0 430.9L601.6 434.5L598.0 438.1L594.4 434.5ZM606.0 419.3L609.6 422.9L606.0 426.5L602.4 422.9ZM605.9 416.9L609.5 420.5L605.9 424.1L602.3 420.5ZM604.9 427.4L608.5 431.0L604.9 434.6L601.3 431.0ZM604.8 424.7L608.4 428.3L604.8 431.9L601.2 428.3ZM607.1 409.9L610.7 413.5L607.1 417.1L603.5 413.5ZM607.0 414.9L610.6 418.5L607.0 422.1L603.4 418.5ZM614.6 398.8L618.2 402.4L614.6 406.0L611.0 402.4ZM612.8 397.0L616.4 400.6L612.8 404.2L609.2 400.6ZM612.9 403.6L616.5 407.2L612.9 410.8L609.3 407.2ZM615.6 407.2L619.2 410.8L615.6 414.4L612.0 410.8ZM615.7 390.9L619.3 394.5L615.7 398.1L612.1 394.5ZM617.4 390.4L621.0 394.0L617.4 397.6L613.8 394.0ZM620.5 397.8L624.1 401.4L620.5 405.0L616.9 401.4ZM619.3 397.4L622.9 401.0L619.3 404.6L615.7 401.0ZM623.3 382.1L626.9 385.7L623.3 389.3L619.7 385.7ZM625.3 383.3L628.9 386.9L625.3 390.5L621.7 386.9ZM627.7 379.7L631.3 383.3L627.7 386.9L624.1 383.3ZM629.1 377.5L632.7 381.1L629.1 384.7L625.5 381.1ZM629.2 375.5L632.8 379.1L629.2 382.7L625.6 379.1ZM630.2 376.2L633.8 379.8L630.2 383.4L626.6 379.8ZM631.9 368.3L635.5 371.9L631.9 375.5L628.3 371.9ZM632.6 368.2L636.2 371.8L632.6 375.4L629.0 371.8ZM634.1 362.1L637.7 365.7L634.1 369.3L630.5 365.7ZM635.7 363.2L639.3 366.8L635.7 370.4L632.1 366.8ZM638.4 356.3L642.0 359.9L638.4 363.5L634.8 359.9ZM640.5 355.3L644.1 358.9L640.5 362.5L636.9 358.9ZM642.7 351.6L646.3 355.2L642.7 358.8L639.1 355.2ZM640.9 349.1L644.5 352.7L640.9 356.3L637.3 352.7ZM643.0 349.2L646.6 352.8L643.0 356.4L639.4 352.8ZM646.0 347.1L649.6 350.7L646.0 354.3L642.4 350.7ZM646.8 341.5L650.4 345.1L646.8 348.7L643.2 345.1ZM646.9 338.2L650.5 341.8L646.9 345.4L643.3 341.8ZM648.9 336.3L652.5 339.9L648.9 343.5L645.3 339.9ZM648.5 335.3L652.1 338.9L648.5 342.5L644.9 338.9ZM654.4 337.4L658.0 341.0L654.4 344.6L650.8 341.0ZM654.4 337.1L658.0 340.7L654.4 344.3L650.8 340.7ZM652.9 324.2L656.5 327.8L652.9 331.4L649.3 327.8ZM654.6 327.1L658.2 330.7L654.6 334.3L651.0 330.7ZM657.2 329.0L660.8 332.6L657.2 336.2L653.6 332.6ZM658.8 325.2L662.4 328.8L658.8 332.4L655.2 328.8ZM662.6 317.6L666.2 321.2L662.6 324.8L659.0 321.2ZM660.9 317.0L664.5 320.6L660.9 324.2L657.3 320.6ZM661.1 309.4L664.7 313.0L661.1 316.6L657.5 313.0ZM660.6 308.5L664.2 312.1L660.6 315.7L657.0 312.1ZM666.9 300.1L670.5 303.7L666.9 307.3L663.3 303.7ZM667.4 301.3L671.0 304.9L667.4 308.5L663.8 304.9ZM669.6 305.8L673.2 309.4L669.6 313.0L666.0 309.4ZM668.6 302.8L672.2 306.4L668.6 310.0L665.0 306.4Z" fill="#000080"/><path d="M508.2 599.5 L712 226.5" stroke="#222" stroke-width="1.3"/><path d="M659.5 314.8 L664.2 319.5 L659.5 324.2 L654.8 319.5Z" fill="#ff0000"/><rect x="501.6" y="599.6" width="6.8" height="6.8" fill="none" stroke="#000" stroke-width="1.3"/><rect x="708.4" y="222.6" width="6.8" height="6.8" fill="none" stroke="#000" stroke-width="1.3"/><path d="M468.5 155 V707 M463 707 H767" stroke="#000" stroke-width="1.2"/><path d="M463 706.8 H474 M466 693.0 H471.5 M466 679.2 H471.5 M466 665.4 H471.5 M466 651.6 H471.5 M463 637.8 H474 M466 624.1 H471.5 M466 610.3 H471.5 M466 596.5 H471.5 M466 582.7 H471.5 M463 568.9 H474 M466 555.1 H471.5 M466 541.3 H471.5 M466 527.5 H471.5 M466 513.7 H471.5 M463 499.9 H474 M466 486.2 H471.5 M466 472.4 H471.5 M466 458.6 H471.5 M466 444.8 H471.5 M463 431.0 H474 M466 417.2 H471.5 M466 403.4 H471.5 M466 389.6 H471.5 M466 375.8 H471.5 M463 362.0 H474 M466 348.3 H471.5 M466 334.5 H471.5 M466 320.7 H471.5 M466 306.9 H471.5 M463 293.1 H474 M466 279.3 H471.5 M466 265.5 H471.5 M466 251.7 H471.5 M466 237.9 H471.5 M463 224.1 H474 M466 210.4 H471.5 M466 196.6 H471.5 M466 182.8 H471.5 M466 169.0 H471.5 M463 155.2 H474 M468.3 701.5 V712.5 M483.2 704.5 V709.5 M498.2 704.5 V709.5 M513.1 704.5 V709.5 M528.0 704.5 V709.5 M543.0 701.5 V712.5 M557.9 704.5 V709.5 M572.8 704.5 V709.5 M587.8 704.5 V709.5 M602.7 704.5 V709.5 M617.6 701.5 V712.5 M632.6 704.5 V709.5 M647.5 704.5 V709.5 M662.4 704.5 V709.5 M677.4 704.5 V709.5 M692.3 701.5 V712.5 M707.2 704.5 V709.5 M722.2 704.5 V709.5 M737.1 704.5 V709.5 M752.0 704.5 V709.5 M767.0 701.5 V712.5" stroke="#000" stroke-width="1.2"/><text x="444.3" y="712.0" font-size="16" text-anchor="middle">0</text><text x="444.3" y="643.0" font-size="16" text-anchor="middle">10</text><text x="444.3" y="574.1" font-size="16" text-anchor="middle">20</text><text x="444.3" y="505.1" font-size="16" text-anchor="middle">30</text><text x="444.3" y="436.2" font-size="16" text-anchor="middle">40</text><text x="444.3" y="367.2" font-size="16" text-anchor="middle">50</text><text x="444.3" y="298.3" font-size="16" text-anchor="middle">60</text><text x="444.3" y="229.3" font-size="16" text-anchor="middle">70</text><text x="444.3" y="160.4" font-size="16" text-anchor="middle">80</text><text x="468.3" y="735" font-size="16" text-anchor="middle">-50</text><text x="543.0" y="735" font-size="16" text-anchor="middle">0</text><text x="617.6" y="735" font-size="16" text-anchor="middle">50</text><text x="692.3" y="735" font-size="16" text-anchor="middle">100</text><text x="767.0" y="735" font-size="16" text-anchor="middle">150</text><text x="617" y="761" font-size="16.8" font-weight="bold" text-anchor="middle">iRT-C18</text><text transform="translate(419 432) rotate(-90)" font-size="16.8" font-weight="bold" text-anchor="middle">Measured Time</text></svg></div>
<div style="position:absolute;left:1195px;top:80px;width:4px;height:697px;background:#efefef;"></div>
<div style="position:absolute;left:1196px;top:80px;width:2px;height:697px;background:#a8a8a8;"></div>
<div style="position:absolute;left:1195px;top:80px;width:4px;height:18px;background:#b0b0b0;"></div>
<div style="position:absolute;left:784px;top:72px;width:411px;height:701px;background:#f0f0f0;border:1px solid #6a6a6a;box-shadow:-3px 3px 12px rgba(0,0,0,0.22);"></div>
<div style="position:absolute;left:785px;top:73px;width:409px;height:30px;background:#fff;"></div>
<svg style="left:793px;top:80px" width="16" height="15" viewBox="0 0 16 15"><g fill="#1f5aa6"><rect x="3.9" y="0" width="1.3" height="3.5"/><path d="M0.8 5.2 L4.5 2.8 L8.2 5.2 V6 H0.8Z"/><rect x="3.5" y="5.5" width="2.1" height="8"/><rect x="7" y="6.2" width="2.6" height="7" fill="#2f6cc0"/><rect x="10.3" y="6" width="3.6" height="7.2" rx="0.8" fill="#2f6cc0"/><path d="M0 13 H16 V14.3 Q16 15 15.3 15 H0.7 Q0 15 0 14.3Z"/></g></svg>
<div style="position:absolute;left:814px;top:80.8px;font-size:11.6px;height:13.9px;line-height:13.9px;color:#000;font-weight:normal;white-space:nowrap;">Edit iRT Calculator</div>
<svg style="left:1174px;top:82px" width="10" height="10" viewBox="0 0 10 10"><path d="M0.5 0.5 L9.5 9.5 M9.5 0.5 L0.5 9.5" stroke="#111" stroke-width="1.1"/></svg>
<div style="position:absolute;left:797px;top:115.9px;font-size:10.65px;height:12.8px;line-height:12.8px;color:#000;font-weight:normal;white-space:nowrap;transform:scaleY(1.12);transform-origin:0 6.4px;">Name:</div>
<div style="position:absolute;left:797px;top:132px;width:176px;height:21px;background:#fff;border:1px solid #0078d7;overflow:hidden;"><div style="position:absolute;left:2px;top:2.5px;font-size:10.65px;line-height:14px;white-space:nowrap;transform:scaleY(1.12);">iRT-C18</div></div>
<div style="position:absolute;left:1108px;top:117px;width:73px;height:22px;background:#e1e1e1;border:2px solid #0078d7;"><div style="position:absolute;left:0;right:0;top:2.0px;text-align:center;font-size:10.65px;line-height:14px;white-space:nowrap;transform:scaleY(1.12);">OK</div></div>
<div style="position:absolute;left:1108px;top:147px;width:73px;height:21px;background:#e1e1e1;border:1px solid #adadad;"><div style="position:absolute;left:0;right:0;top:2.5px;text-align:center;font-size:10.65px;line-height:14px;white-space:nowrap;transform:scaleY(1.12);">Cancel</div></div>
<div style="position:absolute;left:797px;top:174.9px;font-size:10.65px;height:12.8px;line-height:12.8px;color:#000;font-weight:normal;white-space:nowrap;transform:scaleY(1.12);transform-origin:0 6.4px;">iRT database:</div>
<div style="position:absolute;left:797px;top:190px;width:279px;height:21px;background:#fff;border:1px solid #7a7a7a;overflow:hidden;"><div style="position:absolute;left:2px;top:2.5px;font-size:10.65px;line-height:14px;white-space:nowrap;transform:scaleY(1.12);"><span style='font-size:11px'>C:\proj\scratch\pwiz_tools\Skyline\SkylineTester Results\</span></div></div>
<div style="position:absolute;left:798px;top:217px;width:73px;height:21px;background:#e1e1e1;border:1px solid #adadad;"><div style="position:absolute;left:0;right:0;top:2.5px;text-align:center;font-size:10.65px;line-height:14px;white-space:nowrap;transform:scaleY(1.12);">Open...</div></div>
<div style="position:absolute;left:879px;top:217px;width:73px;height:21px;background:#e1e1e1;border:1px solid #adadad;"><div style="position:absolute;left:0;right:0;top:2.5px;text-align:center;font-size:10.65px;line-height:14px;white-space:nowrap;transform:scaleY(1.12);">Create...</div></div>
<div style="position:absolute;left:797px;top:255.4px;font-size:10.65px;height:12.8px;line-height:12.8px;color:#000;font-weight:normal;white-space:nowrap;transform:scaleY(1.12);transform-origin:0 6.4px;">Regression type:</div>
<div style="position:absolute;left:797px;top:271px;width:176px;height:21px;background:#e5e5e5;border:1px solid #adadad;"><div style="position:absolute;left:3px;top:2.5px;font-size:10.65px;line-height:14px;white-space:nowrap;transform:scaleY(1.12);">Linear</div></div>
<svg style="left:959px;top:279.0px" width="9" height="5" viewBox="0 0 9 5"><path d="M0.5 0.5 L4.5 4.5 L8.5 0.5" stroke="#444" stroke-width="1" fill="none"/></svg>
<div style="position:absolute;left:797px;top:309px;width:13px;height:13px;background:#fff;border:1px solid #333;"></div>
<div style="position:absolute;left:816px;top:308.9px;font-size:10.65px;height:12.8px;line-height:12.8px;color:#000;font-weight:normal;white-space:nowrap;transform:scaleY(1.12);transform-origin:0 6.4px;">Store redundant iRT values</div>
<div style="position:absolute;left:798px;top:339.9px;font-size:10.65px;height:12.8px;line-height:12.8px;color:#000;font-weight:normal;white-space:nowrap;transform:scaleY(1.12);transform-origin:0 6.4px;">iRT standards:</div>
<div style="position:absolute;left:1013px;top:332px;width:169px;height:20px;background:#e5e5e5;border:1px solid #adadad;"><div style="position:absolute;left:3px;top:2.0px;font-size:10.65px;line-height:14px;white-space:nowrap;transform:scaleY(1.12);">Biognosys-11 (iRT-C18)</div></div>
<svg style="left:1168px;top:339.5px" width="9" height="5" viewBox="0 0 9 5"><path d="M0.5 0.5 L4.5 4.5 L8.5 0.5" stroke="#444" stroke-width="1" fill="none"/></svg>
<div style="position:absolute;left:797px;top:358px;width:385px;height:108px;background:#fff;border:1px solid #000;overflow:hidden;"></div>
<div style="position:absolute;left:798px;top:359px;width:383px;height:106px;overflow:hidden;"><div style="position:absolute;left:0;top:0;width:383px;height:21px;background:#fff;border-bottom:1px solid #a0a0a0;"></div><div style="position:absolute;left:41px;top:0;width:1px;height:21px;background:#a0a0a0;"></div><div style="position:absolute;left:265px;top:2px;width:1px;height:19px;background:#e0e0e0;"></div><div style="position:absolute;left:49px;top:4px;font-size:10.65px;line-height:14px;transform:scaleY(1.12);">Target</div><div style="position:absolute;left:272px;top:4px;font-size:10.65px;line-height:14px;transform:scaleY(1.12);">iRT Value</div><div style="position:absolute;left:0;top:21px;width:41px;height:22px;border-bottom:1px solid #e4e4e4;border-right:1px solid #a0a0a0;"></div><div style="position:absolute;left:41px;top:21px;width:225px;height:22px;background:#0078d7;border-right:1px solid #a0a0a0;border-bottom:1px solid #a0a0a0;"></div><div style="position:absolute;left:266px;top:21px;width:100px;height:22px;border-right:1px solid #a0a0a0;border-bottom:1px solid #a0a0a0;"></div><div style="position:absolute;left:44px;top:25px;font-size:10.65px;line-height:14px;color:#fff;white-space:nowrap;transform:scaleY(1.12);">LGGNEQVTR</div><div style="position:absolute;left:269px;top:25px;font-size:10.65px;line-height:14px;white-space:nowrap;transform:scaleY(1.12);">-24.92</div><svg style="left:8px;top:27px" width="8" height="10"><path d="M1 1 L6 5.5 L1 10Z" fill="#222"/></svg><div style="position:absolute;left:0;top:43px;width:41px;height:22px;border-bottom:1px solid #e4e4e4;border-right:1px solid #a0a0a0;"></div><div style="position:absolute;left:41px;top:43px;width:225px;height:22px;background:#fff;border-right:1px solid #a0a0a0;border-bottom:1px solid #a0a0a0;"></div><div style="position:absolute;left:266px;top:43px;width:100px;height:22px;border-right:1px solid #a0a0a0;border-bottom:1px solid #a0a0a0;"></div><div style="position:absolute;left:44px;top:47px;font-size:10.65px;line-height:14px;color:#000;white-space:nowrap;transform:scaleY(1.12);">GAGSSEPVTGLDAK</div><div style="position:absolute;left:269px;top:47px;font-size:10.65px;line-height:14px;white-space:nowrap;transform:scaleY(1.12);">0.00</div><div style="position:absolute;left:0;top:65px;width:41px;height:22px;border-bottom:1px solid #e4e4e4;border-right:1px solid #a0a0a0;"></div><div style="position:absolute;left:41px;top:65px;width:225px;height:22px;background:#fff;border-right:1px solid #a0a0a0;border-bottom:1px solid #a0a0a0;"></div><div style="position:absolute;left:266px;top:65px;width:100px;height:22px;border-right:1px solid #a0a0a0;border-bottom:1px solid #a0a0a0;"></div><div style="position:absolute;left:44px;top:69px;font-size:10.65px;line-height:14px;color:#000;white-space:nowrap;transform:scaleY(1.12);">VEATFGVDESNAK</div><div style="position:absolute;left:269px;top:69px;font-size:10.65px;line-height:14px;white-space:nowrap;transform:scaleY(1.12);">12.39</div><div style="position:absolute;left:0;top:87px;width:41px;height:22px;border-bottom:1px solid #e4e4e4;border-right:1px solid #a0a0a0;"></div><div style="position:absolute;left:41px;top:87px;width:225px;height:22px;background:#fff;border-right:1px solid #a0a0a0;border-bottom:1px solid #a0a0a0;"></div><div style="position:absolute;left:266px;top:87px;width:100px;height:22px;border-right:1px solid #a0a0a0;border-bottom:1px solid #a0a0a0;"></div><div style="position:absolute;left:44px;top:91px;font-size:10.65px;line-height:14px;color:#000;white-space:nowrap;transform:scaleY(1.12);">YILAGVENSK</div><div style="position:absolute;left:269px;top:91px;font-size:10.65px;line-height:14px;white-space:nowrap;transform:scaleY(1.12);">19.79</div><div style="position:absolute;left:366px;top:0;width:17px;height:106px;background:#f0f0f0;"></div><svg style="left:371px;top:6px" width="9" height="6"><path d="M1 5 L4.5 1.5 L8 5" stroke="#606060" stroke-width="1.5" fill="none"/></svg><div style="position:absolute;left:367px;top:17px;width:16px;height:24px;background:#cdcdcd;"></div><svg style="left:371px;top:96px" width="9" height="6"><path d="M1 1 L4.5 4.5 L8 1" stroke="#606060" stroke-width="1.5" fill="none"/></svg></div>
<div style="position:absolute;left:803px;top:481.4px;font-size:10.65px;height:12.8px;line-height:12.8px;color:#000;font-weight:normal;white-space:nowrap;transform:scaleY(1.12);transform-origin:0 6.4px;">11 Standard peptides (8 required)</div>
<div style="position:absolute;left:968px;top:501px;width:129px;height:21px;background:#e1e1e1;border:1px solid #adadad;"><div style="position:absolute;left:0;right:0;top:2.5px;text-align:center;font-size:10.65px;line-height:14px;white-space:nowrap;transform:scaleY(1.12);">Choose Standards...</div></div>
<div style="position:absolute;left:1105px;top:501px;width:73px;height:21px;background:#e1e1e1;border:1px solid #adadad;"><div style="position:absolute;left:0;right:0;top:2.5px;text-align:center;font-size:10.65px;line-height:14px;white-space:nowrap;transform:scaleY(1.12);">Recalibrate..</div></div>
<div style="position:absolute;left:802px;top:510.9px;font-size:10.65px;height:12.8px;line-height:12.8px;color:#000;font-weight:normal;white-space:nowrap;transform:scaleY(1.12);transform-origin:0 6.4px;">Other iRT values:</div>
<div style="position:absolute;left:797px;top:526px;width:385px;height:185px;background:#fff;border:1px solid #000;overflow:hidden;"></div>
<div style="position:absolute;left:798px;top:527px;width:383px;height:183px;overflow:hidden;"><div style="position:absolute;left:0;top:0;width:383px;height:21px;background:#fff;border-bottom:1px solid #a0a0a0;"></div><div style="position:absolute;left:41px;top:0;width:1px;height:21px;background:#a0a0a0;"></div><div style="position:absolute;left:265px;top:2px;width:1px;height:19px;background:#e0e0e0;"></div><div style="position:absolute;left:49px;top:4px;font-size:10.65px;line-height:14px;transform:scaleY(1.12);">Target</div><div style="position:absolute;left:272px;top:4px;font-size:10.65px;line-height:14px;transform:scaleY(1.12);">iRT Value</div><div style="position:absolute;left:0;top:21px;width:41px;height:22px;border-bottom:1px solid #e4e4e4;border-right:1px solid #a0a0a0;"></div><div style="position:absolute;left:41px;top:21px;width:225px;height:22px;background:#0078d7;border-right:1px solid #a0a0a0;border-bottom:1px solid #a0a0a0;"></div><div style="position:absolute;left:266px;top:21px;width:100px;height:22px;border-right:1px solid #a0a0a0;border-bottom:1px solid #a0a0a0;"></div><div style="position:absolute;left:44px;top:25px;font-size:10.65px;line-height:14px;color:#fff;white-space:nowrap;transform:scaleY(1.12);">NSAQGNVYVK</div><div style="position:absolute;left:269px;top:25px;font-size:10.65px;line-height:14px;white-space:nowrap;transform:scaleY(1.12);">-16.31</div><svg style="left:8px;top:27px" width="8" height="10"><path d="M1 1 L6 5.5 L1 10Z" fill="#222"/></svg><div style="position:absolute;left:0;top:43px;width:41px;height:22px;border-bottom:1px solid #e4e4e4;border-right:1px solid #a0a0a0;"></div><div style="position:absolute;left:41px;top:43px;width:225px;height:22px;background:#fff;border-right:1px solid #a0a0a0;border-bottom:1px solid #a0a0a0;"></div><div style="position:absolute;left:266px;top:43px;width:100px;height:22px;border-right:1px solid #a0a0a0;border-bottom:1px solid #a0a0a0;"></div><div style="position:absolute;left:44px;top:47px;font-size:10.65px;line-height:14px;color:#000;white-space:nowrap;transform:scaleY(1.12);">ASTEGVAIQGQQGTR</div><div style="position:absolute;left:269px;top:47px;font-size:10.65px;line-height:14px;white-space:nowrap;transform:scaleY(1.12);">-6.99</div><div style="position:absolute;left:0;top:65px;width:41px;height:22px;border-bottom:1px solid #e4e4e4;border-right:1px solid #a0a0a0;"></div><div style="position:absolute;left:41px;top:65px;width:225px;height:22px;background:#fff;border-right:1px solid #a0a0a0;border-bottom:1px solid #a0a0a0;"></div><div style="position:absolute;left:266px;top:65px;width:100px;height:22px;border-right:1px solid #a0a0a0;border-bottom:1px solid #a0a0a0;"></div><div style="position:absolute;left:44px;top:69px;font-size:10.65px;line-height:14px;color:#000;white-space:nowrap;transform:scaleY(1.12);">FGQGGAGPVGGQGPR</div><div style="position:absolute;left:269px;top:69px;font-size:10.65px;line-height:14px;white-space:nowrap;transform:scaleY(1.12);">-0.35</div><div style="position:absolute;left:0;top:87px;width:41px;height:22px;border-bottom:1px solid #e4e4e4;border-right:1px solid #a0a0a0;"></div><div style="position:absolute;left:41px;top:87px;width:225px;height:22px;background:#fff;border-right:1px solid #a0a0a0;border-bottom:1px solid #a0a0a0;"></div><div style="position:absolute;left:266px;top:87px;width:100px;height:22px;border-right:1px solid #a0a0a0;border-bottom:1px solid #a0a0a0;"></div><div style="position:absolute;left:44px;top:91px;font-size:10.65px;line-height:14px;color:#000;white-space:nowrap;transform:scaleY(1.12);">LSSEMNTSTVNSAR</div><div style="position:absolute;left:269px;top:91px;font-size:10.65px;line-height:14px;white-space:nowrap;transform:scaleY(1.12);">-0.28</div><div style="position:absolute;left:0;top:109px;width:41px;height:22px;border-bottom:1px solid #e4e4e4;border-right:1px solid #a0a0a0;"></div><div style="position:absolute;left:41px;top:109px;width:225px;height:22px;background:#fff;border-right:1px solid #a0a0a0;border-bottom:1px solid #a0a0a0;"></div><div style="position:absolute;left:266px;top:109px;width:100px;height:22px;border-right:1px solid #a0a0a0;border-bottom:1px solid #a0a0a0;"></div><div style="position:absolute;left:44px;top:113px;font-size:10.65px;line-height:14px;color:#000;white-space:nowrap;transform:scaleY(1.12);">SVTEQGAELSNEER</div><div style="position:absolute;left:269px;top:113px;font-size:10.65px;line-height:14px;white-space:nowrap;transform:scaleY(1.12);">-0.28</div><div style="position:absolute;left:0;top:131px;width:41px;height:22px;border-bottom:1px solid #e4e4e4;border-right:1px solid #a0a0a0;"></div><div style="position:absolute;left:41px;top:131px;width:225px;height:22px;background:#fff;border-right:1px solid #a0a0a0;border-bottom:1px solid #a0a0a0;"></div><div style="position:absolute;left:266px;top:131px;width:100px;height:22px;border-right:1px solid #a0a0a0;border-bottom:1px solid #a0a0a0;"></div><div style="position:absolute;left:44px;top:135px;font-size:10.65px;line-height:14px;color:#000;white-space:nowrap;transform:scaleY(1.12);">AQYEDIANR</div><div style="position:absolute;left:269px;top:135px;font-size:10.65px;line-height:14px;white-space:nowrap;transform:scaleY(1.12);">3.81</div><div style="position:absolute;left:0;top:153px;width:41px;height:22px;border-bottom:1px solid #e4e4e4;border-right:1px solid #a0a0a0;"></div><div style="position:absolute;left:41px;top:153px;width:225px;height:22px;background:#fff;border-right:1px solid #a0a0a0;border-bottom:1px solid #a0a0a0;"></div><div style="position:absolute;left:266px;top:153px;width:100px;height:22px;border-right:1px solid #a0a0a0;border-bottom:1px solid #a0a0a0;"></div><div style="position:absolute;left:44px;top:157px;font-size:10.65px;line-height:14px;color:#000;white-space:nowrap;transform:scaleY(1.12);">YPEAPPSVR</div><div style="position:absolute;left:269px;top:157px;font-size:10.65px;line-height:14px;white-space:nowrap;transform:scaleY(1.12);">4.25</div><div style="position:absolute;left:0;top:175px;width:41px;height:22px;border-bottom:1px solid #e4e4e4;border-right:1px solid #a0a0a0;"></div><div style="position:absolute;left:41px;top:175px;width:225px;height:22px;background:#fff;border-right:1px solid #a0a0a0;border-bottom:1px solid #a0a0a0;"></div><div style="position:absolute;left:266px;top:175px;width:100px;height:22px;border-right:1px solid #a0a0a0;border-bottom:1px solid #a0a0a0;"></div><div style="position:absolute;left:44px;top:179px;font-size:10.65px;line-height:14px;color:#000;white-space:nowrap;transform:scaleY(1.12);">SADGSAPAGEGEGVTLQR</div><div style="position:absolute;left:269px;top:179px;font-size:10.65px;line-height:14px;white-space:nowrap;transform:scaleY(1.12);">5.54</div><div style="position:absolute;left:366px;top:0;width:17px;height:183px;background:#f0f0f0;"></div><svg style="left:371px;top:6px" width="9" height="6"><path d="M1 5 L4.5 1.5 L8 5" stroke="#606060" stroke-width="1.5" fill="none"/></svg><div style="position:absolute;left:367px;top:17px;width:16px;height:24px;background:#cdcdcd;"></div><svg style="left:371px;top:173px" width="9" height="6"><path d="M1 1 L4.5 4.5 L8 1" stroke="#606060" stroke-width="1.5" fill="none"/></svg></div>
<div style="position:absolute;left:803px;top:737.4px;font-size:10.65px;height:12.8px;line-height:12.8px;color:#000;font-weight:normal;white-space:nowrap;transform:scaleY(1.12);transform-origin:0 6.4px;">148 Peptides</div>
<div style="position:absolute;left:1108px;top:737px;width:73px;height:21px;background:#e1e1e1;border:1px solid #adadad;"><div style="position:absolute;left:0;right:0;top:2.5px;text-align:center;font-size:10.65px;line-height:14px;white-space:nowrap;transform:scaleY(1.12);">Add...</div></div>
<svg style="left:1182px;top:760px" width="10" height="10" viewBox="0 0 10 10"><g fill="#b0b0b0"><rect x="7" y="1" width="2" height="2"/><rect x="4" y="4" width="2" height="2"/><rect x="7" y="4" width="2" height="2"/><rect x="1" y="7" width="2" height="2"/><rect x="4" y="7" width="2" height="2"/><rect x="7" y="7" width="2" height="2"/></g></svg>
<div style="position:absolute;left:794px;top:773px;width:1px;height:4px;background:#8a8a8a;"></div>
<div style="position:absolute;left:799px;top:773px;width:1px;height:4px;background:#8a8a8a;"></div>
<div style="position:absolute;left:0px;top:0px;width:1200px;height:800px;border:1px solid #6f6f6f;"></div>
</body></html>
